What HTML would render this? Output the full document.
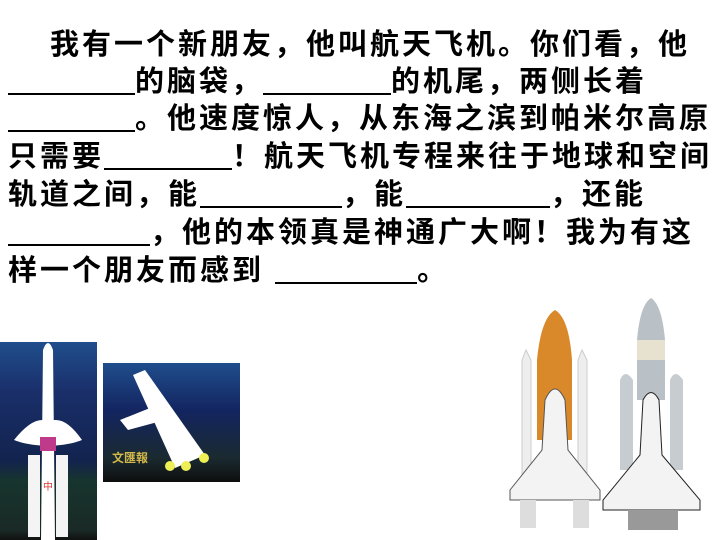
<!DOCTYPE html>
<html><head><meta charset="utf-8"><style>
body{margin:0;width:720px;height:540px;background:#fff;position:relative;overflow:hidden;font-family:"Liberation Sans","Noto Sans CJK SC",sans-serif;}
.l{position:absolute;left:8px;font-size:29px;letter-spacing:3px;font-weight:bold;line-height:38px;white-space:nowrap;color:#000;}
.b{display:inline-block;border-bottom:2px solid #000;height:30px;vertical-align:top;}
</style></head><body>
<div class="l" style="top:26px;left:50px">我有一个新朋友，他叫航天飞机。你们看，他</div>
<div class="l" style="top:63px"><span class="b" style="width:127px"></span>的脑袋，<span class="b" style="width:128px"></span>的机尾，两侧长着</div>
<div class="l" style="top:100px"><span class="b" style="width:127px"></span>。他速度惊人，从东海之滨到帕米尔高原</div>
<div class="l" style="top:138px">只需要<span class="b" style="width:128px"></span>！航天飞机专程来往于地球和空间</div>
<div class="l" style="top:176px">轨道之间，能<span class="b" style="width:142px"></span>，能<span class="b" style="width:144px"></span>，还能</div>
<div class="l" style="top:214px"><span class="b" style="width:142px"></span>，他的本领真是神通广大啊！我为有这</div>
<div class="l" style="top:252px">样一个朋友而感到 <span class="b" style="width:142px"></span>。</div>

<svg style="position:absolute;left:0;top:0" width="720" height="540">
<defs>
<linearGradient id="g1" x1="0" y1="0" x2="0" y2="1"><stop offset="0" stop-color="#1f4e8c"/><stop offset="0.25" stop-color="#1a2f6a"/><stop offset="0.6" stop-color="#12234e"/><stop offset="0.7" stop-color="#17342e"/><stop offset="0.95" stop-color="#1a2a26"/><stop offset="1" stop-color="#111"/></linearGradient>
<linearGradient id="g2" x1="0" y1="0" x2="0" y2="1"><stop offset="0" stop-color="#1f4e8c"/><stop offset="0.4" stop-color="#132560"/><stop offset="0.8" stop-color="#1a2a30"/><stop offset="1" stop-color="#0e0e0e"/></linearGradient>
</defs>
<rect x="0" y="342" width="97" height="198" fill="url(#g1)"/>
<path d="M14 440 Q30 420 42 420 L56 420 Q68 420 82 440 Q70 445 48 446 Q26 445 14 440Z" fill="#fff"/>
<path d="M43 350 Q48 336 53 350 L55 540 L41 540Z" fill="#fff"/>
<rect x="28" y="455" width="12" height="82" fill="#f4f4f4"/><rect x="56" y="455" width="12" height="82" fill="#f4f4f4"/>
<rect x="40" y="437" width="16" height="14" fill="#c03a8c"/>
<text x="48" y="490" font-size="10" fill="#d33" text-anchor="middle" font-family="Noto Sans CJK SC">中</text>
<rect x="103" y="363" width="137" height="119" fill="url(#g2)"/>
<path d="M133 375 L145 370 L205 455 L175 468Z" fill="#fff"/>
<path d="M120 420 L150 408 L165 420 L128 430Z" fill="#fff"/>
<circle cx="170" cy="466" r="5" fill="#ee5"/><circle cx="186" cy="466" r="5" fill="#ee5"/><circle cx="204" cy="458" r="5" fill="#ee5"/>
<text x="112" y="462" font-size="12" fill="#d4b84a" font-family="Noto Sans CJK SC" font-weight="bold">文匯報</text>
<!-- US shuttle -->
<path d="M537 360 Q541 318 555 310 Q569 318 572 360 L572 440 L537 440Z" fill="#d9892a"/>
<path d="M522 360 L526 350 L531 360 L531 500 L522 500Z" fill="#eee" stroke="#ccc"/>
<path d="M578 360 L582 350 L587 360 L587 500 L578 500Z" fill="#eee" stroke="#ccc"/>
<path d="M545 400 Q555 378 565 400 L568 450 L600 490 L600 500 L510 500 L510 490 L542 450Z" fill="#f3f3f3" stroke="#555"/>
<rect x="520" y="500" width="16" height="28" fill="#ddd"/><rect x="573" y="500" width="16" height="28" fill="#ddd"/>
<!-- Buran -->
<path d="M637 340 Q640 305 651 298 Q662 305 665 340 L665 400 L637 400Z" fill="#b9c0c6"/>
<rect x="637" y="340" width="28" height="20" fill="#e7e2d0"/>
<path d="M620 380 Q625 368 633 380 L633 470 L620 470Z" fill="#c6ccd0"/>
<path d="M670 380 Q675 368 683 380 L683 470 L670 470Z" fill="#c6ccd0"/>
<path d="M643 400 Q651 385 659 400 L662 455 L700 500 L700 510 L603 510 L603 500 L640 455Z" fill="#f3f3f3" stroke="#222"/>
<rect x="628" y="510" width="50" height="20" fill="#999"/>
</svg>
</body></html>
